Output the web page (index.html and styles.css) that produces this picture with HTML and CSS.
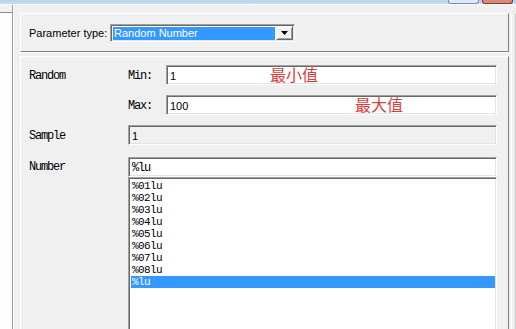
FILE: index.html
```html
<!DOCTYPE html>
<html>
<head>
<meta charset="utf-8">
<link rel="stylesheet" href="styles.css">
</head>
<body>
<div class="titlebar">
  <span class="tb-btn"></span>
  <span class="tb-btn tb-close"></span>
</div>
<div class="main">
  <div class="leftpane"><div class="lp-top"></div></div>
  <div class="content">
    <div class="toppanel">
      <span class="ptype-label">Parameter type:</span>
      <div class="combo">
        <div class="combo-value"><span>Random Number</span></div>
        <div class="combo-btn"><svg width="7" height="4" viewBox="0 0 7 4"><path d="M0 0H7L3.5 4Z" fill="#000"/></svg></div>
      </div>
    </div>
    <div class="mainpanel">
      <div class="row">
        <div class="lbl">Random</div>
        <div class="field">
          <span class="sublbl">Min:</span>
          <div class="edit">
            <span class="val">1</span>
            <span class="note note-min">最小值</span>
          </div>
        </div>
      </div>
      <div class="row">
        <div class="lbl"></div>
        <div class="field">
          <span class="sublbl">Max:</span>
          <div class="edit">
            <span class="val">100</span>
            <span class="note note-max">最大值</span>
          </div>
        </div>
      </div>
      <div class="row">
        <div class="lbl">Sample</div>
        <div class="field">
          <div class="edit disabled"><span class="val">1</span></div>
        </div>
      </div>
      <div class="row row-number">
        <div class="lbl lbl-top">Number</div>
        <div class="field field-col">
          <div class="edit edit-num"><span class="val mono">%lu</span></div>
          <ul class="listbox">
            <li>%01lu</li>
            <li>%02lu</li>
            <li>%03lu</li>
            <li>%04lu</li>
            <li>%05lu</li>
            <li>%06lu</li>
            <li>%07lu</li>
            <li>%08lu</li>
            <li class="selected">%lu</li>
          </ul>
        </div>
      </div>
    </div>
  </div>
  <div class="rightstrip"></div>
</div>
</body>
</html>
```

FILE: styles.css
```css
* { box-sizing: border-box; }
html, body {
  margin: 0;
  padding: 0;
}
body {
  width: 516px;
  height: 329px;
  overflow: hidden;
  background: #f0f0f0;
  font-family: "Liberation Sans", Arial, sans-serif;
  font-size: 11px;
  color: #000;
}

.titlebar {
  height: 5px;
  background: linear-gradient(#b9d1ec, #cadcf1);
  border-bottom: 1px solid #f8fbff;
  display: flex;
  justify-content: flex-end;
  align-items: flex-start;
  padding-right: 3px;
  gap: 3px;
}
.tb-btn {
  width: 31px;
  height: 4px;
  background: #dfe9f5;
  border: 1px solid #6f8db4;
  border-top: none;
  border-radius: 0 0 3px 3px;
}
.tb-close {
  width: 31px;
  background: #d98a7a;
  border-color: #8d3a2e;
}

.main {
  display: flex;
  height: 324px;
}

.leftpane {
  width: 13px;
  background: #fdfdfd;
  border-right: 1px solid #9c9c9c;
  box-shadow: 1px 0 0 #fff;
  flex: none;
}
.lp-top {
  height: 8px;
  background: #f2f2f2;
  border-bottom: 1px solid #8e8e8e;
}

.content {
  width: 489px;
  margin-left: 7px;
  flex: none;
  display: flex;
  flex-direction: column;
  min-height: 0;
}

.toppanel {
  flex: none;
  margin-top: 8px;
  height: 39px;
  border-top: 1px solid #fff;
  border-left: 1px solid #fff;
  border-right: 1px solid #7f7f7f;
  border-bottom: 1px solid #7f7f7f;
  box-shadow: 0 1px 0 #fff;
  display: flex;
  align-items: center;
  padding-left: 8px;
}
.ptype-label {
  width: 81px;
  flex: none;
  padding-top: 1px;
}
.combo {
  width: 185px;
  height: 18px;
  display: flex;
  background: #fff;
  border-top: 1px solid #a0a0a0;
  border-left: 1px solid #a0a0a0;
  border-bottom: 1px solid #fff;
  border-right: 1px solid #fff;
  box-shadow: inset 1px 1px 0 #696969, inset -1px -1px 0 #e3e3e3;
  padding: 1px;
}
.combo-value {
  flex: 1;
  padding: 1px;
}
.combo-value span {
  display: block;
  height: 13px;
  line-height: 13px;
  background: #3399ff;
  color: #fff;
  padding-left: 1px;
}
.combo-btn {
  width: 17px;
  flex: none;
  background: #f0f0f0;
  border-top: 1px solid #f0f0f0;
  border-left: 1px solid #f0f0f0;
  border-right: 1px solid #696969;
  border-bottom: 1px solid #696969;
  box-shadow: inset 1px 1px 0 #fff, inset -1px -1px 0 #a0a0a0;
  display: flex;
  align-items: center;
  justify-content: center;
}

.mainpanel {
  margin-top: 4px;
  flex: 1;
  min-height: 0;
  overflow: hidden;
  border-top: 1px solid #fff;
  border-left: 1px solid #fff;
  border-right: 1px solid #7f7f7f;
  padding: 8px 11px 0 8px;
  display: flex;
  flex-direction: column;
  gap: 10px;
}

.row {
  flex: none;
  display: flex;
  align-items: center;
}
.row-number {
  align-items: flex-start;
  margin-top: 2px;
}
.lbl, .sublbl, .mono {
  font-family: "Liberation Mono", "Courier New", monospace;
  font-size: 12px;
  letter-spacing: -1.2px;
  color: #000;
}
.lbl {
  width: 99px;
  flex: none;
  padding-top: 2px;
}
.lbl-top {
  padding-top: 3px;
}
.field {
  flex: 1;
  display: flex;
  align-items: center;
}
.field-col {
  flex-direction: column;
  align-items: stretch;
}
.sublbl {
  width: 38px;
  flex: none;
  padding-top: 2px;
}

.edit {
  position: relative;
  flex: 1;
  height: 20px;
  background: #fff;
  border-top: 1px solid #a0a0a0;
  border-left: 1px solid #a0a0a0;
  border-bottom: 1px solid #fff;
  border-right: 1px solid #fff;
  box-shadow: inset 1px 1px 0 #696969, inset -1px -1px 0 #e3e3e3;
  padding: 1px 0 0 3px;
  display: flex;
  align-items: center;
}
.edit.disabled {
  background: #f0f0f0;
}
.edit-num {
  flex: none;
  height: 20px;
}
.val {
  line-height: 16px;
}

.note {
  position: absolute;
  top: 0;
  font-family: "Noto Sans CJK SC", sans-serif;
  font-size: 16px;
  line-height: 17px;
  color: #dc3c3c;
}
.note-min { left: 103px; }
.note-max { left: 188px; }

.listbox {
  flex: none;
  margin: 0;
  list-style: none;
  height: 170px;
  background: #fff;
  border-top: 1px solid #a0a0a0;
  border-left: 1px solid #a0a0a0;
  border-right: 1px solid #fff;
  box-shadow: inset 1px 1px 0 #696969, inset -1px 0 0 #e3e3e3;
  padding: 2px 1px 0 2px;
  font-family: "Liberation Mono", "Courier New", monospace;
  font-size: 11px;
  letter-spacing: -0.6px;
  color: #000;
}
.listbox li {
  height: 12px;
  line-height: 12px;
  padding-left: 1px;
}
.listbox li.selected {
  background: #3399ff;
  color: #fff;
}

.rightstrip {
  flex: 1;
  border-left: 1px solid #fff;
  margin-left: 2px;
  margin-top: 9px;
  border-right: 1px solid #c8c8c8;
}
```
